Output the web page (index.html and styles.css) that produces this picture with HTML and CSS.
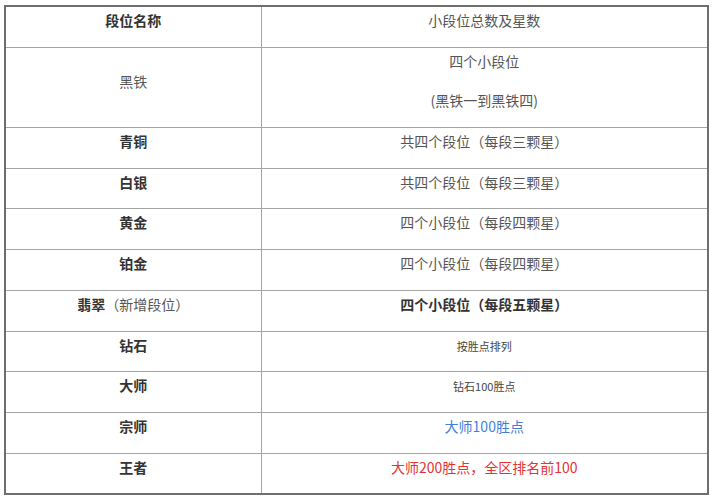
FILE: index.html
```html
<!DOCTYPE html>
<html lang="zh">
<head>
<meta charset="utf-8">
<link rel="stylesheet" href="styles.css">
</head>
<body>
<div class="wrap">
<table class="rank">
  <colgroup><col class="c1"><col class="c2"></colgroup>
  <tr>
    <td><p><b>段位名称</b></p></td>
    <td><p>小段位总数及星数</p></td>
  </tr>
  <tr>
    <td><p>黑铁</p></td>
    <td><p>四个小段位</p><p>(黑铁一到黑铁四)</p></td>
  </tr>
  <tr>
    <td><p><b>青铜</b></p></td>
    <td><p>共四个段位（每段三颗星）</p></td>
  </tr>
  <tr>
    <td><p><b>白银</b></p></td>
    <td><p>共四个段位（每段三颗星）</p></td>
  </tr>
  <tr>
    <td><p><b>黄金</b></p></td>
    <td><p>四个小段位（每段四颗星）</p></td>
  </tr>
  <tr>
    <td><p><b>铂金</b></p></td>
    <td><p>四个小段位（每段四颗星）</p></td>
  </tr>
  <tr>
    <td><p><b>翡翠</b>（新增段位）</p></td>
    <td><p><b>四个小段位（每段五颗星）</b></p></td>
  </tr>
  <tr>
    <td><p><b>钻石</b></p></td>
    <td><p class="small">按胜点排列</p></td>
  </tr>
  <tr>
    <td><p><b>大师</b></p></td>
    <td><p class="small">钻石100胜点</p></td>
  </tr>
  <tr>
    <td><p><b>宗师</b></p></td>
    <td><p class="blue">大师100胜点</p></td>
  </tr>
  <tr>
    <td><p><b>王者</b></p></td>
    <td><p class="red">大师200胜点，全区排名前100</p></td>
  </tr>
</table>
</div>
</body>
</html>
```
FILE: styles.css
```css
html, body {
  margin: 0;
  padding: 0;
  background: #ffffff;
}
.wrap {
  padding: 5px 0 0 4px;
}
.rank {
  border-collapse: collapse;
  width: 705px;
  border: 2px solid #6e6e6e;
  font-family: "Noto Sans CJK SC", "Noto Sans", sans-serif;
  font-size: 14px;
  color: #555555;
}
.c1 { width: 256px; }
.rank td {
  border: 1px solid #a4a4a4;
  padding: 0;
  text-align: center;
  vertical-align: middle;
}
.rank p {
  margin: 0 0 13.7px;
  line-height: 26px;
}
.rank b {
  color: #333333;
  font-weight: bold;
}
.rank .small {
  font-size: 11px;
  color: #444444;
  padding-top: 3px;
  line-height: 23px;
}
.rank .blue {
  color: #3f7fd9;
}
.rank .red {
  color: #e53333;
}
```
